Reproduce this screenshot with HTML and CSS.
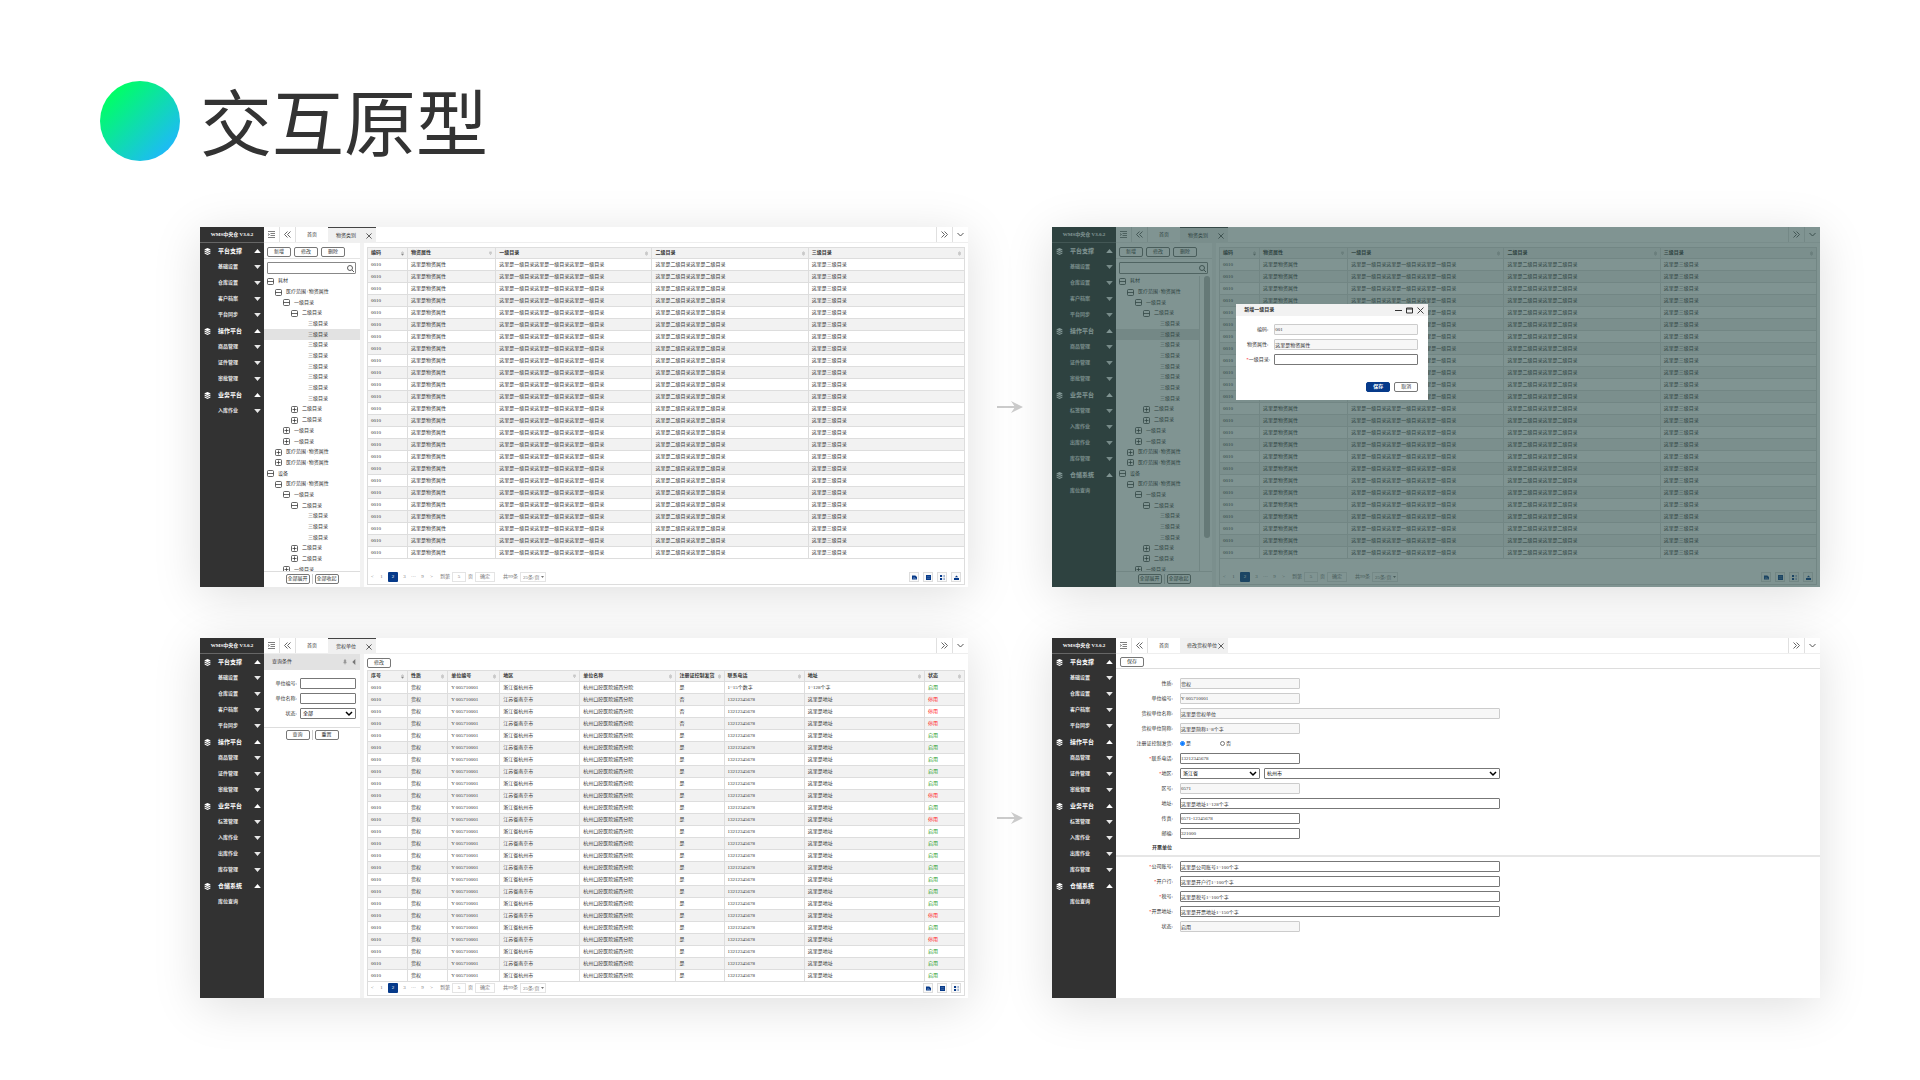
FILE: index.html
```html
<!DOCTYPE html>
<html lang="zh-CN">
<head>
<meta charset="utf-8">
<title>交互原型</title>
<link rel="stylesheet" href="styles.css">
</head>
<body>
<svg class="sprite" aria-hidden="true">
  <symbol id="i-stack" viewBox="0 0 12 12"><path d="M6 0l5 2.2v1L6 5.4 1 3.200v-1zM1 4.400l5 2.200 5-2.200v2L6 8.600 1 6.400zM1 7.600l5 2.200 5-2.200v2L6 12 1 9.600z" fill="currentColor"/></symbol>
  <symbol id="i-up" viewBox="0 0 10 6"><path d="M5 0l5 6H0z" fill="currentColor"/></symbol>
  <symbol id="i-down" viewBox="0 0 10 6"><path d="M5 6l5-6H0z" fill="currentColor"/></symbol>
  <symbol id="i-menu" viewBox="0 0 14 14"><path d="M0 1h14M5 5h9M5 9h9M0 13h14M0 5l3 2-3 2" stroke="currentColor" fill="none" stroke-width="1.500"/></symbol>
  <symbol id="i-left2" viewBox="0 0 14 14"><path d="M7 1L1 7l6 6M13 1L7 7l6 6" stroke="currentColor" fill="none" stroke-width="1.800"/></symbol>
  <symbol id="i-right2" viewBox="0 0 14 14"><path d="M1 1l6 6-6 6M7 1l6 6-6 6" stroke="currentColor" fill="none" stroke-width="1.800"/></symbol>
  <symbol id="i-chev" viewBox="0 0 14 14"><path d="M1 4l6 6 6-6" stroke="currentColor" fill="none"/></symbol>
  <symbol id="i-close" viewBox="0 0 14 14"><path d="M1 1l12 12M13 1L1 13" stroke="currentColor" fill="none" stroke-width="1.800"/></symbol>
  <symbol id="i-min" viewBox="0 0 14 14"><path d="M0 7h14" stroke="currentColor" stroke-width="2"/></symbol>
  <symbol id="i-max" viewBox="0 0 14 14"><path d="M1 2h12v10H1zM1 4h12" stroke="currentColor" fill="none" stroke-width="2"/></symbol>
  <symbol id="i-search" viewBox="0 0 14 14"><path d="M10 10l4 4M11 6A5 5 0 1 1 1 6a5 5 0 0 1 10 0z" stroke="currentColor" fill="none" stroke-width="1.600"/></symbol>
  <symbol id="i-minus" viewBox="0 0 14 14"><rect x="1" y="1" width="12" height="12" rx="2" fill="none" stroke="currentColor" stroke-width="1.500"/><path d="M1 7h12" stroke="currentColor" stroke-width="1.500"/></symbol>
  <symbol id="i-plus" viewBox="0 0 14 14"><rect x="1" y="1" width="12" height="12" rx="2" fill="none" stroke="currentColor" stroke-width="1.500"/><path d="M3 7h8M7 3v8" stroke="currentColor" stroke-width="1.500"/></symbol>
  <symbol id="i-sort" viewBox="0 0 8 12"><path d="M1 5l3-4 3 4zM1 7l3 4 3-4z" fill="none" stroke="currentColor"/></symbol>
  <symbol id="i-sortdown" viewBox="0 0 8 12"><path d="M1 5l3-4 3 4z" fill="none" stroke="currentColor"/><path d="M1 7l3 4 3-4z" fill="currentColor" stroke="currentColor"/></symbol>
  <symbol id="i-sortup" viewBox="0 0 8 12"><path d="M1 2h6M1 4l3 5 3-5z" fill="none" stroke="currentColor"/></symbol>
  <symbol id="i-pin" viewBox="0 0 12 14"><path d="M3 1h6M4 1v6M8 1v6M1 9h10M3 7h6M6 9v5" stroke="currentColor" fill="none" stroke-width="1.800"/></symbol>
  <symbol id="i-caret" viewBox="0 0 8 14"><path d="M7 0v14L0 7z" fill="currentColor"/></symbol>
  <symbol id="i-x1" viewBox="0 0 12 12"><path d="M0 1h8l4 4v6H0z" fill="currentColor"/><path d="M3 9l2-3 2 3M8 9h2" stroke="#fff" fill="none"/></symbol>
  <symbol id="i-x2" viewBox="0 0 12 12"><path d="M0 0h12v12H0z" fill="currentColor"/><path d="M2 4h8M2 8h8" stroke="#fff" stroke-opacity=".5"/></symbol>
  <symbol id="i-x3" viewBox="0 0 12 12"><path d="M0 0h5v5H0zM0 7h5v5H0z" fill="currentColor"/><path d="M8 1h4M8 4h4M8 8h4M8 11h4" stroke="currentColor"/></symbol>
  <symbol id="i-x4" viewBox="0 0 12 12"><path d="M0 7h12v5H0zM2 5.500h8L6 1z" fill="currentColor"/></symbol>
  <symbol id="i-arrow" viewBox="0 0 27 14"><path d="M0 7h20" stroke="currentColor" stroke-width="2"/><path d="M14 1l12 6-12 6 4-6z" fill="currentColor"/></symbol>
</svg>

<main class="board">
  <header class="title"><span class="dot"></span><h1>交互原型</h1></header>

  <div class="grid">
    <section class="panel">
      <aside class="side" data-side="short"></aside>
      <div class="main">
        <div class="topbar" data-tab="物资类别"></div>
        <div class="body">
          <div class="treecol" data-tree="a"></div>
          <div class="content content-pad" data-table="goods"></div>
        </div>
      </div>
    </section>

    <svg class="arrow"><use href="#i-arrow"/></svg>

    <section class="panel">
      <aside class="side" data-side="full"></aside>
      <div class="main">
        <div class="topbar" data-tab="物资类别"></div>
        <div class="body">
          <div class="treecol treecol-scroll" data-tree="b"></div>
          <div class="content content-pad" data-table="goods"></div>
        </div>
      </div>
      <div class="overlay">
        <form class="dialog">
          <div class="dialog-head"><h2>新增一级目录</h2>
            <button type="button" aria-label="最小化"><svg><use href="#i-min"/></svg></button>
            <button type="button" aria-label="最大化"><svg><use href="#i-max"/></svg></button>
            <button type="button" aria-label="关闭"><svg><use href="#i-close"/></svg></button>
          </div>
          <div class="dialog-body">
            <div class="field"><label for="d1">编码:</label><input id="d1" value="001" readonly></div>
            <div class="field"><label for="d2">物资属性:</label><input id="d2" value="这里是物资属性" readonly></div>
            <div class="field"><label for="d3"><i>*</i>一级目录:</label><input id="d3"></div>
            <div class="dialog-foot"><button type="button" class="btn btn-primary">保存</button><button type="button" class="btn">取消</button></div>
          </div>
        </form>
      </div>
    </section>

    <section class="panel">
      <aside class="side" data-side="full"></aside>
      <div class="main">
        <div class="topbar" data-tab="货权单位"></div>
        <div class="body">
          <form class="treecol">
            <div class="query-head"><h2>查询条件</h2><svg><use href="#i-pin"/></svg><svg><use href="#i-caret"/></svg></div>
            <div class="query-body">
              <div class="field"><label for="q1">单位编号:</label><input id="q1"></div>
              <div class="field"><label for="q2">单位名称:</label><input id="q2"></div>
              <div class="field"><label for="q3">状态:</label><span class="select"><select id="q3"><option>全部</option></select><svg><use href="#i-chev"/></svg></span></div>
            </div>
            <div class="pair"><button type="button" class="btn">查询</button><span></span><button type="button" class="btn">重置</button></div>
          </form>
          <div class="content" data-table="units"><div class="tools"><button type="button" class="btn">修改</button></div></div>
        </div>
      </div>
    </section>

    <svg class="arrow"><use href="#i-arrow"/></svg>

    <section class="panel">
      <aside class="side" data-side="full"></aside>
      <div class="main">
        <div class="topbar topbar-plain" data-tab="修改货权单位"></div>
        <form class="edit">
          <div class="edit-tools"><button type="button" class="btn">保存</button></div>
          <div class="edit-body">
            <div class="field"><label for="e1">性质:</label><input id="e1" value="货权" readonly></div>
            <div class="field"><label for="e2">单位编号:</label><input id="e2" value="Y 005710001" readonly></div>
            <div class="field wide"><label for="e3">货权单位名称:</label><input id="e3" value="这里是货权单位" readonly></div>
            <div class="field"><label for="e4">货权单位简称:</label><input id="e4" value="这里是简称1~8个字" readonly></div>
            <div class="field" role="radiogroup" aria-labelledby="e5"><span class="lab" id="e5">注册证控制发货:</span>
              <label class="radio"><input type="radio" name="ctl" checked>是</label><label class="radio"><input type="radio" name="ctl">否</label></div>
            <div class="field"><label for="e6"><i>*</i>联系电话:</label><input id="e6" value="13212345678"></div>
            <div class="field wide"><label for="e7"><i>*</i>地区:</label><span class="split">
              <span class="select"><select id="e7"><option>浙江省</option></select><svg><use href="#i-chev"/></svg></span>
              <span class="select"><select aria-label="城市"><option>杭州市</option></select><svg><use href="#i-chev"/></svg></span></span></div>
            <div class="field"><label for="e8">区号:</label><input id="e8" value="0571" readonly></div>
            <div class="field wide"><label for="e9">地址:</label><input id="e9" value="这里是地址1~128个字"></div>
            <div class="field"><label for="e10">传真:</label><input id="e10" value="0571-12345678"></div>
            <div class="field"><label for="e11">邮编:</label><input id="e11" value="321000"></div>
          </div>
          <h2 class="legend"><span>开票单位</span></h2>
          <div class="edit-body">
            <div class="field wide"><label for="e12"><i>*</i>公司账号:</label><input id="e12" value="这里是公司账号1~100个字"></div>
            <div class="field wide"><label for="e13"><i>*</i>开户行:</label><input id="e13" value="这里是开户行1~100个字"></div>
            <div class="field wide"><label for="e14"><i>*</i>税号:</label><input id="e14" value="这里是税号1~100个字"></div>
            <div class="field wide"><label for="e15"><i>*</i>开票地址:</label><input id="e15" value="这里是开票地址1~150个字"></div>
            <div class="field"><label for="e16">状态:</label><input id="e16" value="启用" readonly></div>
          </div>
        </form>
      </div>
    </section>
  </div>
</main>
<script src="app.js"></script>
</body>
</html>
```
FILE: styles.css
```css
* { box-sizing: border-box; }
body {
  margin: 0;
  background: #fff;
  color: #333;
  font-family: "Liberation Serif", "Noto Sans CJK SC", serif;
  font-size: 5px;
  line-height: 8px;
}
button, input, select { font: inherit; color: inherit; margin: 0; padding: 0; }
button { background: none; border: 0; line-height: 8px; }
h1, h2, ul { margin: 0; padding: 0; font-size: inherit; }
ul { list-style: none; }
a { color: inherit; text-decoration: none; }
svg { display: block; flex: none; }
i { color: #f00; font-style: normal; }
.sprite { position: absolute; width: 0; height: 0; }

.board { padding: 69px 100px 82px; overflow: hidden; }
.title { display: flex; align-items: center; gap: 20px; height: 104px; margin-bottom: 54px; }
.title h1 { font: 400 72px/100px "Noto Sans CJK SC", sans-serif; color: #333; padding-bottom: 4px; }
.dot { width: 80px; height: 80px; border-radius: 50%; background: linear-gradient(135deg, #00ff66 15%, #1fb6ff 90%); }

.grid {
  display: grid;
  grid-template-columns: minmax(0, 1fr) 84px minmax(0, 1fr);
  row-gap: 51px;
  padding-left: 100px;
}
.arrow { width: 27px; height: 14px; color: #ccc; place-self: center; }
.panel {
  position: relative;
  display: flex;
  min-height: 360px;
  background: #fff;
  box-shadow: 0 8px 45px rgba(0, 0, 0, .13);
}

/* sidebar */
.side { flex: none; width: 64px; background: #323232; color: #fff; font-weight: 700; }
.brand { height: 16px; line-height: 15px; text-align: center; border-bottom: 1px solid #666; white-space: nowrap; }
.side a { display: flex; align-items: center; height: 16px; padding: 0 3px 0 18px; color: #e8e8e8; }
.side a.group { padding-left: 4px; font-size: 6px; color: #fff; }
.side a.group svg:first-child { width: 7px; height: 7px; margin-right: 7px; }
.side a span { flex: 1; }
.side a .tri { width: 7px; height: 4px; }

/* tab bar */
.main { flex: 1; min-width: 0; display: flex; flex-direction: column; }
.topbar { display: flex; height: 16px; border-bottom: 1px solid #eee; }
.topbar > * { display: flex; align-items: center; justify-content: center; }
.topbar .ico { width: 16px; border-right: 1px solid #e0e0e0; color: #555; }
.topbar .ico svg { width: 7px; height: 7px; }
.topbar .tab { width: 32px; }
.topbar .tab-on { width: 48px; height: 16px; justify-content: flex-start; gap: 10px; padding-left: 8px; background: #f0f0f0; border-top: 1px solid #444; white-space: nowrap; }
.topbar-plain .tab-on { gap: 1px; padding-left: 7px; border-top: 0; }
.tab-on svg { width: 6px; height: 6px; }
.topbar .space { flex: 1; }
.topbar .space ~ .ico { border-right: 0; border-left: 1px solid #e0e0e0; }

/* left column */
.body { flex: 1; display: flex; min-height: 0; }
.treecol { flex: none; width: 100px; border-right: 4px solid #f2f2f2; display: flex; flex-direction: column; }
.btns { display: flex; gap: 3px; height: 16px; padding: 4px 3px 0; border-bottom: 1px solid #e4e4e4; }
.btn { width: 24px; height: 10px; border: 1px solid #777; border-radius: 2px; background: #fff; text-align: center; white-space: nowrap; }
.btn-primary { background: #063a8a; border-color: #063a8a; color: #fff; font-weight: 700; }
.search { position: relative; margin: 3px 4px 2px 3px; height: 12px; }
.search input { width: 100%; height: 12px; border: 1px solid #888; border-radius: 1px; display: block; }
.search svg { position: absolute; right: 2px; top: 3px; width: 7px; height: 7px; }
.treebox { position: relative; height: 295px; overflow: hidden; }
.tree { display: grid; grid-template-rows: repeat(28, 1fr); height: calc(100% + 4px); }
.tree li { display: flex; align-items: center; gap: 4px; }
.tree svg { width: 7px; height: 7px; }
.lv0 { padding-left: 3px; }
.lv1 { padding-left: 11px; }
.lv2 { padding-left: 19px; }
.lv3 { padding-left: 27px; }
.lv4 { padding-left: 44px; }
.tree .picked { background: #e2e2e2; }
.treecol-scroll .tree { margin-right: 12px; border-right: 1px solid #ddd; }
.thumb { position: absolute; right: 2px; top: 0; width: 6px; height: 262px; border-radius: 3px; background: #bbb; }
.pair { display: flex; justify-content: center; gap: 2px; padding-top: 2px; border-top: 1px solid #ddd; }
.pair span { width: 1px; background: #ccc; }

/* data grid */
.content { flex: 1; min-width: 0; padding: 0 3px 2px; display: flex; flex-direction: column; }
.content-pad { padding-top: 4px; }
.tools { height: 16px; padding-top: 4px; }
.data { width: 100%; table-layout: fixed; border-collapse: separate; border-spacing: 0; border-left: 1px solid #ddd; border-top: 1px solid #ddd; }
.data th, .data td { height: 12px; padding: 0 3px; text-align: left; line-height: 10px; border-right: 1px solid #ddd; border-bottom: 1px solid #ddd; white-space: nowrap; overflow: hidden; }
.data th { height: 11px; background: #f2f2f2; }
.data th div { display: flex; align-items: center; justify-content: space-between; }
.data th svg { width: 3px; height: 5px; color: #888; }
.data tbody tr:nth-child(even) { background: #f2f2f2; }
.data .on { color: #1a9a1a; }
.data .off { color: #ff2020; }
.pager { flex: 1; display: flex; align-items: flex-end; gap: 2px; padding: 0 3px 2px 1px; border: 1px solid #ddd; border-top: 0; color: #777; }
.pager button, .pager input, .pager span { height: 10px; line-height: 10px; white-space: nowrap; }
.pager .pg { width: 7px; text-align: center; }
.pager .cur { width: 10px; margin: 0 1px; background: #063a8a; color: #fff; border-radius: 1px; }
.pager .to { margin-left: 3px; }
.pager input { width: 14px; border: 1px solid #e4e4e4; text-align: center; }
.pager .go { width: 20px; border: 1px solid #e4e4e4; line-height: 8px; margin-right: 6px; }
.pager select { display: block; width: 26px; height: 10px; border: 1px solid #e4e4e4; padding: 0 0 0 2px; background: #fff; appearance: none; }
.pager .per { position: relative; }
.pager .per svg { position: absolute; right: 2px; top: 4px; width: 3px; height: 2px; }
.pager .space { flex: 1; }
.pager .tool { width: 10px; margin-left: 2px; display: grid; place-items: center; border: 1px solid #ddd; background: #fafafa; color: #063a8a; }
.pager .tool svg { width: 5px; height: 5px; }

/* forms */
.field { display: flex; align-items: center; height: 11px; }
.field > label:first-child, .lab { flex: none; width: 50px; margin-right: 7px; text-align: right; white-space: nowrap; }
.field > input, .select select { width: 120px; height: 11px; border: 1px solid #777; border-radius: 1px; background: #fff; }
.field > input[readonly] { background: #f7f7f7; border-color: #ccc; }
.wide > input, .split { flex: 1; width: auto; }
.select { position: relative; display: flex; min-width: 0; }
.select select { flex: 1; width: 100%; min-width: 0; appearance: none; padding-left: 2px; color: #000; }
.select svg { position: absolute; right: 3px; top: 2px; width: 8px; height: 7px; stroke-width: 3px; color: #000; }
.ico svg { stroke-width: 2px; }
.query-head { display: flex; align-items: center; gap: 5px; height: 16px; padding: 0 4px 0 8px; background: #e2e2e2; }
.query-head h2 { flex: 1; font-weight: 400; }
.query-head svg { width: 4px; height: 6px; color: #777; }
.query-body { display: grid; grid-template-columns: minmax(0, 1fr); gap: 4px; padding: 8px 4px 8px 3px; }
.query-body .field > label:first-child { width: 30px; margin-right: 3px; }
.query-body .field > input, .query-body .select { flex: 1; width: auto; min-width: 0; }

.edit-tools { height: 15px; padding: 3px 4px 0; border-bottom: 1px solid #ddd; }
.edit-body { display: grid; gap: 4px; padding: 9px 0 4px 7px; }
.edit .wide { width: 377px; max-width: 100%; }
.split { display: grid; grid-template-columns: 80px 1fr; gap: 4px; }
.radio { display: flex; align-items: center; gap: 1px; width: 40px; }
.radio input { width: 5px; height: 5px; }
.legend { height: 14px; border-bottom: 2px solid #e6e6e6; line-height: 9px; }
.legend span { display: block; width: 56px; text-align: right; }
.legend + .edit-body { padding-top: 4px; }

/* modal */
.overlay { position: absolute; inset: 0; padding: 77px 0 0 24%; background: rgba(43, 77, 73, .6); }
.dialog { width: 33%; max-width: 192px; height: 96px; background: #fff; display: flex; flex-direction: column; }
.dialog-head { display: flex; align-items: center; gap: 4px; height: 12px; padding: 0 4px 0 8px; background: #f2f2f2; }
.dialog-head h2 { flex: 1; }
.dialog-head svg { width: 7px; height: 7px; }
.dialog-body { flex: 1; display: grid; gap: 4px; align-content: start; padding: 8px 10px; }
.dialog .field > label:first-child { width: 22px; margin-right: 6px; }
.dialog .field > input { flex: 1; width: auto; min-width: 0; }
.dialog-foot { display: flex; justify-content: flex-end; gap: 4px; padding-top: 13px; }
```
FILE: app.js
```js
const icon = (id, cls = '') => `<svg class="${cls}"><use href="#i-${id}"/></svg>`;

const menu = {
  full: [['平台支撑', '基础设置', '仓库设置', '客户档案', '平台同步'], ['操作平台', '商品管理', '证件管理', '审批管理'],
    ['业务平台', '标签管理', '入库作业', '出库作业', '库存管理'], ['仓储系统', '库位查询']],
  short: [['平台支撑', '基础设置', '仓库设置', '客户档案', '平台同步'], ['操作平台', '商品管理', '证件管理', '审批管理'],
    ['业务平台', '入库作业']],
};
document.querySelectorAll('[data-side]').forEach(el => {
  el.innerHTML = '<div class="brand">WMS中央仓 V3.0.2</div><nav>' + menu[el.dataset.side].map(([head, ...items]) =>
    `<a href="#" class="group">${icon('stack')}<span>${head}</span>${icon('up', 'tri')}</a>` +
    items.map(t => `<a href="#"><span>${t}</span>${t === '库位查询' ? '' : icon('down', 'tri')}</a>`).join('')).join('') + '</nav>';
});

document.querySelectorAll('[data-tab]').forEach(el => {
  el.innerHTML = `<button class="ico" aria-label="菜单">${icon('menu')}</button><button class="ico" aria-label="向左">${icon('left2')}</button>
    <a href="#" class="tab">首页</a><a href="#" class="tab-on">${el.dataset.tab}${icon('close')}</a><span class="space"></span>
    <button class="ico" aria-label="向右">${icon('right2')}</button><button class="ico" aria-label="更多">${icon('chev')}</button>`;
});

// level, state, label
const leaf = [4, '', '三级目录'];
const scope = '医疗范围+物资属性';
const nodes = [[0, 'minus', '耗材'], [1, 'minus', scope], [2, 'minus', '一级目录'], [3, 'minus', '二级目录'],
  ...Array(8).fill(leaf), [3, 'plus', '二级目录'], [3, 'plus', '二级目录'], [2, 'plus', '一级目录'], [2, 'plus', '一级目录'],
  [1, 'plus', scope], [1, 'plus', scope], [0, 'minus', '设备'], [1, 'minus', scope], [2, 'minus', '一级目录'],
  [3, 'minus', '二级目录'], leaf, leaf, leaf, [3, 'plus', '二级目录'], [3, 'plus', '二级目录'], [2, 'plus', '一级目录']];
document.querySelectorAll('[data-tree]').forEach(el => {
  el.innerHTML = '<div class="btns">' + ['新增', '修改', '删除'].map(t => `<button class="btn">${t}</button>`).join('') + '</div>' +
    `<div class="search"><input type="search" aria-label="搜索目录">${icon('search')}</div><div class="treebox"><ul class="tree">` +
    nodes.map(([lv, st, t], i) => `<li class="lv${lv}${i === 5 ? ' picked' : ''}">${st ? icon(st) : ''}<span>${t}</span></li>`).join('') +
    `</ul>${el.dataset.tree === 'b' ? '<div class="thumb"></div>' : ''}</div>` +
    '<div class="pair"><button class="btn">全部展开</button><span></span><button class="btn">全部收起</button></div>';
});

const stopped = [2, 3, 4, 10, 12, 20, 22];
const tables = {
  goods: {
    cols: [['编码', 40, 'sortdown'], ['物资属性', 88, 'sortup'], ['一级目录', 156, 'sort'], ['二级目录', 156, 'sort'], ['三级目录', 156, 'sort']],
    row: () => ['0010', '这里是物资属性', '这里是一级目录'.repeat(3), '这里是二级目录'.repeat(2), '这里是三级目录'],
    tools: 4,
  },
  units: {
    cols: [['序号', 40, 'sortdown'], ['性质', 40, 'sort'], ['单位编号', 52, 'sort'], ['地区', 80, 'sortup'], ['单位名称', 96, 'sort'],
      ['注册证控制发货', 48, 'sort'], ['联系电话', 80, 'sort'], ['地址', 120, 'sort'], ['状态', 40, 'sort']],
    row: n => ['0010', '货权', 'Y 005710001', n % 2 ? '浙江省杭州市' : '江苏省南京市', '杭州口腔医院城西分院', n > 1 && n < 5 ? '否' : '是',
      n === 1 ? '1~15个数字' : '13212345678', n === 1 ? '1~128个字' : '这里是地址',
      stopped.includes(n) ? '<span class="off">停用</span>' : '<span class="on">启用</span>'],
    tools: 3,
  },
};
document.querySelectorAll('[data-table]').forEach(el => {
  const { cols, row, tools } = tables[el.dataset.table];
  const total = cols.reduce((sum, c) => sum + c[1], 0);
  const rows = Array.from({ length: 25 }, (_, i) => '<tr>' + row(i + 1).map(c => `<td>${c}</td>`).join('') + '</tr>').join('');
  el.insertAdjacentHTML('beforeend', '<table class="data"><colgroup>' +
    cols.map(c => `<col style="width:${c[1] / total * 100}%">`).join('') + '</colgroup><thead><tr>' +
    cols.map(c => `<th><div>${c[0]}${icon(c[2])}</div></th>`).join('') + `</tr></thead><tbody>${rows}</tbody></table>
    <div class="pager"><button class="pg">&lt;</button><button class="pg">1</button><button class="cur">2</button><button class="pg">3</button>
    <span class="pg">···</span><button class="pg">9</button><button class="pg">&gt;</button><span class="to">到第</span><input value="5" aria-label="页码"><span>页</span>
    <button class="go">确定</button><span>共99条</span><span class="per"><select aria-label="每页条数"><option>25条/页</option></select>${icon('down')}</span><span class="space"></span>` +
    Array.from({ length: tools }, (_, i) => `<button class="tool" aria-label="工具${i + 1}">${icon('x' + (i + 1))}</button>`).join('') + '</div>');
});
```
